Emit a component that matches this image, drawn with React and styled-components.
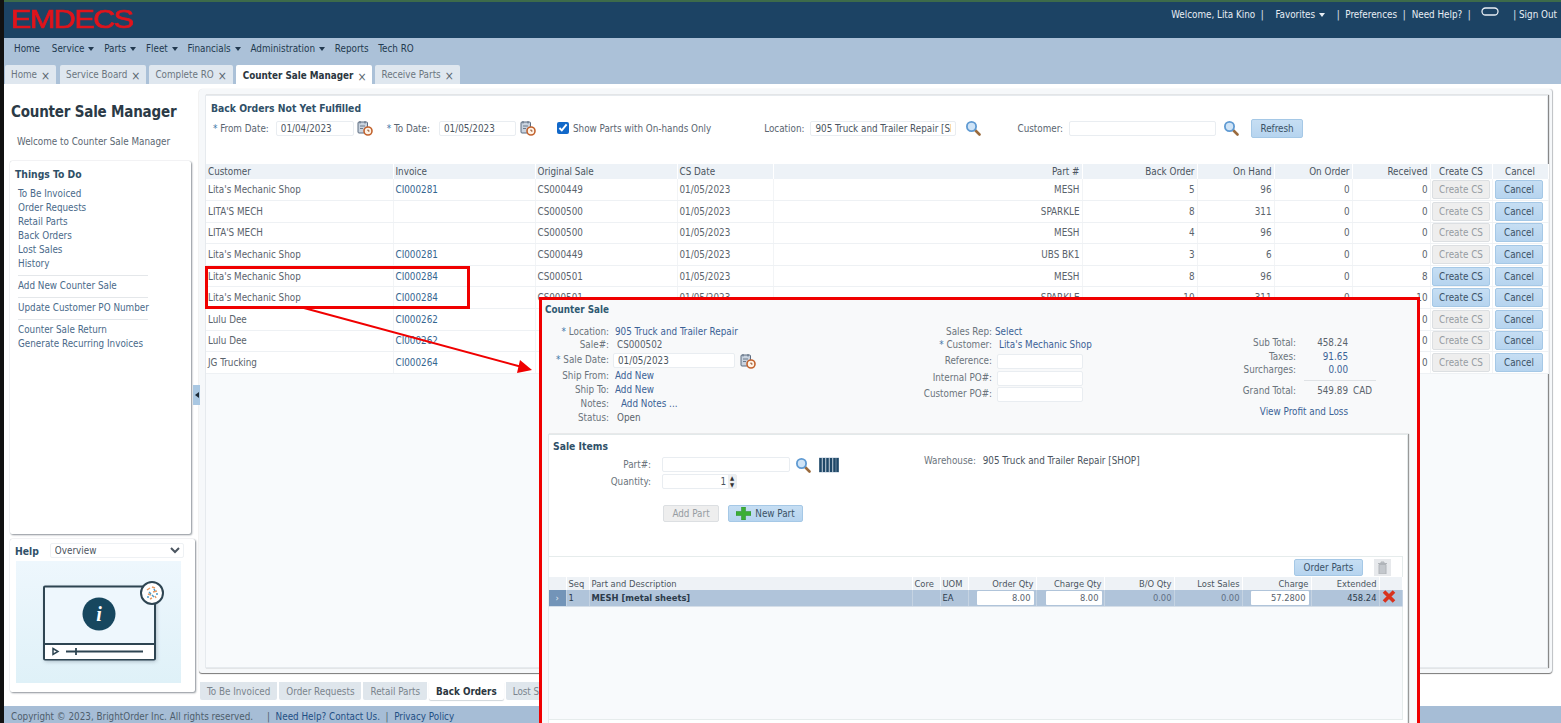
import React from 'react'
import styled, { createGlobalStyle } from 'styled-components'

const Global = createGlobalStyle`
  html, body { margin: 0; padding: 0; background: #000; }
  body { font-family: "DejaVu Sans Condensed", "DejaVu Sans", sans-serif; font-stretch: condensed; font-size: 9.8px; color: #4b5560; }
  * { box-sizing: border-box; }
  input, select, button { font-family: inherit; font-stretch: inherit; }
`

const Page = styled.div`
  position: relative;
  width: 1561px;
  height: 723px;
  overflow: hidden;
  border-left: 4px solid #111;
  background: #fff;
  display: flex;
  flex-direction: column;
`
const Header = styled.header`
  height: 38px;
  flex: none;
  background: #1c4364;
  border-top: 2px solid #3d6b4a;
  display: flex;
  justify-content: space-between;
  padding: 0 4px 0 7px;
`
const Logo = styled.div`
  font-family: "Liberation Sans", sans-serif;
  font-stretch: normal;
  font-size: 25px;
  line-height: 34px;
  color: #e0141c;
  -webkit-text-stroke: 0.7px #e0141c;
  transform: scaleX(1.22);
  transform-origin: left;
  letter-spacing: -1.2px;
`
const UserBar = styled.div`
  display: flex;
  gap: 6px;
  color: #e8eef4;
  height: 24px;
  align-items: center;
  font-weight: 500;
  white-space: pre;
`
const Oval = styled.svg`
  margin: -5px 0 0 4px;
`
const NavBar = styled.nav`
  height: 26px;
  flex: none;
  background: #abc1d8;
  display: flex;
  align-items: center;
  gap: 9.8px;
  padding: 0 10px 6px;
  color: #22394f;
  & > span:first-child { margin-right: 2px; }
`
const Caret = styled.span`
  display: inline-block;
  margin-left: 4px;
  vertical-align: 1px;
  border: 3px solid transparent;
  border-top: 4px solid ${p => p.$light ? '#e8eef4' : '#22394f'};
  border-bottom: 0;
`
const TabBar = styled.div`
  height: 20px;
  flex: none;
  background: #abc1d8;
  display: flex;
  gap: 3px;
  padding: 0 0 0 1px;
  & > div:first-child { margin-right: 1px; }
`
const Tab = styled.div`
  height: ${p => p.$active ? 20 : 19}px;
  margin-top: 1px;
  padding: 0 6px 0 ${p => p.$active ? 7 : 6}px;
  display: flex;
  align-items: center;
  gap: 4px;
  background: ${p => p.$active ? '#fff' : '#dfe7ef'};
  color: ${p => p.$active ? '#2b3640' : '#6b7680'};
  font-weight: ${p => p.$active ? 700 : 400};
  border-radius: 2px 2px 0 0;
`
const TabClose = styled.span`
  font-size: 12px;
  line-height: 10px;
  margin-top: 3px;
  color: #5a6670;
  font-weight: 400;
`
const Body = styled.div`
  flex: 1;
  min-height: 0;
  display: flex;
`
const Side = styled.aside`
  width: 195px;
  flex: none;
  padding: 0 0 0 6px;
  display: flex;
  flex-direction: column;
`
const SideTitle = styled.h1`
  margin: 20px 0 0 1px;
  font-size: 15px;
  line-height: 16px;
  letter-spacing: -0.2px;
  color: #2b3a46;
  white-space: nowrap;
`
const SideWelcome = styled.p`
  margin: 16px 0 0 7px;
  line-height: 12px;
  color: #5b6772;
`
const Card = styled.section`
  background: #fff;
  border-radius: 2px;
  box-shadow: 1px 1px 2px #8c9298, 0 0 1px #b5bbc1;
`
const TodoCard = styled(Card)`
  margin-top: 13px;
  width: 181px;
  height: 373px;
  padding: 7px 5px;
`
const CardTitle = styled.h2`
  margin: 0;
  font-size: 10.300px;
  line-height: 12px;
  color: #2f5068;
`
const LinkList = styled.div`
  margin: 7px 0 0 3px;
  width: 130px;
  display: flex;
  flex-direction: column;
  color: #4a6a8a;
  line-height: 14px;
  white-space: nowrap;
`
const Rule = styled.div`
  height: 1px;
  background: #e4e7ea;
  margin: 4px 0 3px;
`
const HelpCard = styled(Card)`
  margin-top: 5px;
  width: 185px;
  height: 153px;
  padding: 4px 6px;
`
const HelpRow = styled.div`
  display: flex;
  align-items: center;
  gap: 11px;
  margin-left: -1px;
`
const HelpSelect = styled.select`
  width: 134px;
  height: 15px;
  font-size: 9.8px;
  color: #4b5560;
  background: #fff;
  border: 1px solid #eef1f4;
  border-radius: 2px;
`
const HelpArt = styled.div`
  margin-top: 3px;
  width: 165px;
  height: 122px;
  background: linear-gradient(#eef7fd, #dff1f8);
`
const MainCol = styled.div`
  flex: 1;
  min-width: 0;
  position: relative;
  display: flex;
  flex-direction: column;
  padding-right: 9px;
`
const Collapse = styled.div`
  position: absolute;
  left: -6px;
  top: 301px;
  width: 7px;
  height: 20px;
  background: #a9c7e2;
  display: flex;
  align-items: center;
  justify-content: center;
  &::before {
    content: "";
    border: 3px solid transparent;
    border-right: 4px solid #1d2a36;
    border-left: 0;
  }
`
const Outer = styled.div`
  height: 584px;
  margin-top: 5px;
  padding: 6px 4px 5px 6px;
  border-radius: 3px;
  background: #f6f8fa;
  box-shadow: 0 1px 1px #777, 1px 0 1px #c5c9cd;
`
const Inner = styled.div`
  height: 100%;
  background: #f8fafc;
  border: 1px solid #e6eaee;
  box-shadow: 1px 0 1px #888;
  display: flex;
  flex-direction: column;
`
const FilterArea = styled.div`
  background: #fff;
  height: 68px;
  padding: 6px 5px;
  flex: none;
`
const FilterRow = styled.div`
  margin-top: 5px;
  display: flex;
  align-items: center;
  height: 18px;
`
const Label = styled.span`
  color: #5a6570;
  white-space: nowrap;
  margin-left: ${p => p.$ml || 0}px;
`
const Star = styled.span`
  color: #3f77a8;
`
const TextInput = styled.input`
  width: ${p => p.$w}px;
  height: 15px;
  margin-left: ${p => p.$ml ?? 6}px;
  padding: 0 4px;
  font-size: 9.8px;
  color: #4b5560;
  background: #fff;
  border: 1px solid #e9edf1;
  border-radius: 2px;
  outline: none;
`
const QtyInput = styled(TextInput)`
  text-align: right;
  padding-right: 10px;
`
const Check = styled.input`
  margin: 0 4px 0 21px;
  width: 12px;
  height: 12px;
  accent-color: #1168c9;
`
const IconSlot = styled.span`
  display: inline-flex;
  margin-left: ${p => p.$ml ?? 3}px;
`
const Btn = styled.button`
  height: ${p => p.$h || 19}px;
  width: ${p => p.$w}px;
  margin-left: ${p => p.$ml || 0}px;
  padding: 0;
  font-size: 9.8px;
  border-radius: 2px;
  display: inline-flex;
  align-items: center;
  justify-content: center;
  gap: 4px;
  vertical-align: middle;
  border: 1px solid ${p => p.disabled ? '#dcdfe2' : '#a5c8e6'};
  background: ${p => p.disabled ? '#eeeeee' : 'linear-gradient(#c6def3, #b6d4ef)'};
  color: ${p => p.disabled ? '#969ca2' : '#3b5266'};
`
const Table = styled.table`
  width: 100%;
  table-layout: fixed;
  border-collapse: collapse;
  background: #fff;
`
const Th = styled.th`
  height: 15px;
  padding: 0 2px;
  font-weight: 400;
  text-align: ${p => p.$align || 'left'};
  color: #4b5560;
  background: #edf2f7;
  border-right: 1px solid #fff;
`
const Td = styled.td`
  height: 21.6px;
  padding: 0 2px;
  text-align: ${p => p.$align || 'left'};
  color: ${p => p.$link ? '#34658f' : '#5a636c'};
  border-bottom: 1px solid #eef1f4;
  border-right: 1px solid #f2f4f6;
  white-space: nowrap;
  overflow: hidden;
`
const BtnCell = styled(Td)`
  padding: 0 ${p => p.$pr || 1}px 0 1px;
`
const TabsBottom = styled.div`
  display: flex;
  gap: 2px;
  margin: 9px 0 0 1px;
  height: 18px;
`
const BottomTab = styled.div`
  padding: 0 7px;
  display: flex;
  align-items: center;
  border-radius: 0 0 2px 2px;
  background: ${p => p.$active ? '#fff' : '#dfe6ec'};
  color: ${p => p.$active ? '#2b3640' : '#7a848d'};
  font-weight: ${p => p.$active ? 700 : 400};
  box-shadow: ${p => p.$active ? '0 1px 1px #cfd5da' : 'none'};
`
const Footer = styled.footer`
  height: 17px;
  flex: none;
  background: #a6bdd6;
  color: #4e5d6c;
  display: flex;
  align-items: center;
  padding: 3px 0 0 7px;
  white-space: pre;
`
const FootLink = styled.span`
  color: #1f4f84;
`
const Highlight = styled.div`
  position: absolute;
  left: 201px;
  top: 266px;
  width: 265px;
  height: 43px;
  border: 3px solid #f00000;
`
const Arrow = styled.svg`
  position: absolute;
  left: 296px;
  top: 300px;
`
const Popup = styled.div`
  position: absolute;
  left: 535px;
  top: 297px;
  width: 881px;
  height: 440px;
  background: #f8f9fa;
  border: 3px solid #f00000;
  padding: 0 9px 0 6px;
`
const PopupTitle = styled.h2`
  margin: 4px 0 0 -3px;
  font-size: 9.8px;
  line-height: 12px;
  color: #2f5a72;
`
const SaleTop = styled.div`
  display: flex;
  height: 98px;
  margin-top: 9px;
`
const FieldGrid = styled.div`
  display: grid;
  grid-template-columns: ${p => p.$label}px auto;
  grid-auto-rows: min-content;
  column-gap: ${p => p.$gap}px;
  width: ${p => p.$w}px;
  flex: none;
`
const FLabel = styled.div`
  text-align: right;
  height: ${p => p.$h || 14}px;
  line-height: 14px;
  color: #6b747c;
  white-space: nowrap;
`
const FValue = styled.div`
  height: ${p => p.$h || 14}px;
  line-height: 14px;
  padding-left: ${p => p.$pl || 0}px;
  color: ${p => p.$link ? '#3b6296' : '#5a636c'};
  white-space: nowrap;
`
const FormInput = styled(TextInput)`
  display: block;
  margin-left: ${p => p.$ml ?? 0}px;
`
const DateRow = styled.div`
  display: flex;
  align-items: flex-start;
`
const Totals = styled.div`
  margin-left: 119px;
  padding-top: 11px;
  display: grid;
  grid-template-columns: 80px 52px 28px;
  grid-auto-rows: min-content;
  align-content: start;
  line-height: 13.5px;
  width: 160px;
`
const TotLabel = styled.div`
  text-align: right;
  color: #6b747c;
  white-space: nowrap;
  min-height: ${p => p.$gap ? 7 : 13.5}px;
  height: ${p => p.$gap ? '7px' : 'auto'};
`
const TotValue = styled.div`
  text-align: right;
  color: ${p => p.$link ? '#3b6296' : '#5a636c'};
`
const TotUnit = styled.div`
  padding-left: 5px;
  color: #5a636c;
`
const TotRule = styled.div`
  grid-column: 2 / 4;
  margin: 3px 0 3px 8px;
  height: 1px;
  background: #dfe2e5;
`
const TotLink = styled.div`
  grid-column: 1 / 3;
  text-align: right;
  color: #3b6296;
  margin-top: 8px;
`
const SaleCard = styled.section`
  margin: 11px 0 0 0;
  height: 300px;
  width: 860px;
  background: #fff;
  border: 1px solid #e3e9ea;
  box-shadow: 1px 0 1px #999;
  padding: 5px 4px;
`
const SaleHead = styled.div`
  height: 94px;
  margin-top: 4px;
  display: flex;
`
const SaleForm = styled.div`
  width: 369px;
  flex: none;
`
const SaleRow = styled.div`
  display: flex;
  align-items: center;
  height: 17px;
`
const SaleLabel = styled.span`
  width: 98px;
  text-align: right;
  color: #6b747c;
`
const Spin = styled.span`
  position: absolute;
  right: 1px;
  top: 1px;
  width: 8px;
  height: 13px;
  background: #eceff1;
  font-size: 6px;
  line-height: 6.5px;
  text-align: center;
  color: #333;
`
const SpinWrap = styled.span`
  position: relative;
  display: inline-flex;
  margin-left: 11px;
`
const SaleButtons = styled.div`
  display: flex;
  gap: 9px;
  margin: 15px 0 0 110px;
`
const Warehouse = styled.div`
  margin-left: 2px;
  margin-top: -1px;
  color: #6b747c;
`
const WarehouseName = styled.span`
  color: #4b5560;
  margin-left: 4px;
`
const GridBox = styled.div`
  margin: 6px 0 0 -5px;
  width: 855px;
  height: 164px;
  background: #f8fafc;
  border: 1px solid #e6ecec;
`
const GridTools = styled.div`
  height: 20px;
  background: #fff;
  display: flex;
  justify-content: flex-end;
  align-items: center;
  gap: 11px;
  padding-right: 11px;
`
const TrashBox = styled.span`
  width: 17px;
  height: 17px;
  background: #e7e9ec;
  display: inline-flex;
  align-items: center;
  justify-content: center;
`
const ItemTable = styled.table`
  width: 100%;
  table-layout: fixed;
  border-collapse: collapse;
`
const ItemTh = styled.th`
  height: 13px;
  padding: 0 2px;
  font-weight: 400;
  font-size: 9.300px;
  background: #eef2f6;
  color: #4b5560;
  text-align: ${p => p.$align || 'left'};
  border-right: 1px solid #fff;
`
const ItemTd = styled.td`
  height: 16px;
  padding: 0 2px;
  font-size: 9.300px;
  background: #b0c4da;
  color: ${p => p.$muted ? '#5f7084' : '#2c3b4a'};
  font-weight: ${p => p.$bold ? 700 : 400};
  text-align: ${p => p.$align || 'left'};
  border-right: 1px solid #c5d3e2;
  border-bottom: 1px solid #d5dee8;
  white-space: nowrap;
  overflow: hidden;
`
const HandleCell = styled(ItemTd)`
  background: #7394b8;
  color: #e8eef4;
  text-align: center;
`
const QtyBox = styled.div`
  height: 14px;
  margin-left: ${p => p.$ml || 0}px;
  padding: 0 3px;
  line-height: 14px;
  text-align: right;
  background: #fff;
  color: #59636d;
  border-radius: 1px;
`

const Search = ({ size = 16 }) => (
  <svg width={size} height={size} viewBox="0 0 16 16">
    <line x1="9.5" y1="9.5" x2="14.5" y2="14.5" stroke="#9a6a3c" strokeWidth="2.6" strokeLinecap="round" />
    <circle cx="6.5" cy="6.5" r="4.6" fill="#cfe4f7" stroke="#5f9ad2" strokeWidth="1.8" />
  </svg>
)

const Calendar = () => (
  <svg width="16" height="16" viewBox="0 0 16 16">
    <rect x="1" y="2" width="9.5" height="11" rx="1" fill="#c9d3df" stroke="#5d6c80" />
    <path d="M3 1v2.500M8 1v2.500" stroke="#5d6c80" />
    <path d="M3 6h5M3 8.500h3" stroke="#6d7a8a" />
    <circle cx="11" cy="11" r="4" fill="#fff3e6" stroke="#c2622d" strokeWidth="1.6" />
    <path d="M11 9.500V11h1.500" stroke="#8a4520" fill="none" />
  </svg>
)

const Barcode = () => (
  <svg width="20" height="16" viewBox="0 0 20 16">
    <rect width="20" height="16" fill="#dbe3ec" />
    <path d="M1.500 1v14M5 1v14M8.500 1v14M12 1v14M15.500 1v14M18.500 1v14" stroke="#1f4868" strokeWidth="2.600" />
  </svg>
)

const Plus = () => (
  <svg width="15" height="13" viewBox="0 0 15 13">
    <path d="M5.500 0h4v4.500H15v4H9.500V13h-4V8.500H0v-4h5.500z" fill="#3cae35" stroke="#2a8a2a" strokeWidth=".5" />
  </svg>
)

const RedX = () => (
  <svg width="14" height="13" viewBox="0 0 14 13">
    <path d="M2 1.500L12 11.500M12 1.500L2 11.500" stroke="#d8321e" strokeWidth="3.600" />
  </svg>
)

const Trash = () => (
  <svg width="9" height="13" viewBox="0 0 9 13">
    <path d="M0 2.500h9M3 2.500V1h3v1.500M1 3.500h7V13H1z" fill="#c3c7cc" stroke="#b0b4b9" />
  </svg>
)

const HelpVideo = () => (
  <svg width="165" height="122" viewBox="0 0 165 122">
    <defs>
      <filter id="soft"><feGaussianBlur stdDeviation="2" /></filter>
    </defs>
    <rect x="29" y="27" width="111" height="73" fill="#567" opacity=".5" filter="url(#soft)" />
    <rect x="28" y="25.500" width="111" height="73" rx="1" fill="#eef7fd" stroke="#2e4552" strokeWidth="2" />
    <rect x="29" y="83" width="109" height="15" fill="#fff" />
    <line x1="28" y1="83" x2="139" y2="83" stroke="#2e4552" strokeWidth="2" />
    <circle cx="83" cy="53" r="16.500" fill="#17475f" />
    <text x="83" y="60" fontSize="20" fontStyle="italic" fontWeight="700" fontFamily="Liberation Serif, serif" fill="#fff" textAnchor="middle">i</text>
    <path d="M37 87.500l5 3-5 3z" fill="#fff" stroke="#2e4552" strokeWidth="1.500" />
    <line x1="50" y1="90.500" x2="127" y2="90.500" stroke="#2e4552" strokeWidth="1.800" />
    <line x1="60" y1="87" x2="60" y2="94" stroke="#2e4552" strokeWidth="1.800" />
    <circle cx="136" cy="32" r="11" fill="#fff" stroke="#2e4552" strokeWidth="2" />
    <path d="M131 29l3-2M136 26l3 1M132 33l3 1M137 31l4-1M134 38l2-1M139 35l1 2" stroke="#e89a62" strokeWidth="1.500" />
    <path d="M133 31l2 2M138 28l1 2M131 36l2 0M136 34l2 2M141 32l0 2" stroke="#4f9bc4" strokeWidth="1.500" />
  </svg>
)

const COLS = [187, 142, 142, 96, 309, 115, 77, 78, 78, 62, 56]
const HEADS = [
  ['Customer'], ['Invoice'], ['Original Sale'], ['CS Date'], ['Part #', 'right'], ['Back Order', 'right'],
  ['On Hand', 'right'], ['On Order', 'right'], ['Received', 'right'], ['Create CS', 'center'], ['Cancel', 'center'],
]
// last three rows are mostly behind the popup, only what shows is filled in
const ROWS = [
  ["Lita's Mechanic Shop", 'CI000281', 'CS000449', 'MESH', 5, 96, 0, 0, false],
  ["LITA'S MECH", '', 'CS000500', 'SPARKLE', 8, 311, 0, 0, false],
  ["LITA'S MECH", '', 'CS000500', 'MESH', 4, 96, 0, 0, false],
  ["Lita's Mechanic Shop", 'CI000281', 'CS000449', 'UBS BK1', 3, 6, 0, 0, false],
  ["Lita's Mechanic Shop", 'CI000284', 'CS000501', 'MESH', 8, 96, 0, 8, true],
  ["Lita's Mechanic Shop", 'CI000284', 'CS000501', 'SPARKLE', 10, 311, 0, 10, true],
  ['Lulu Dee', 'CI000262', '', '', '', '', '', 0, false],
  ['Lulu Dee', 'CI000262', '', '', '', '', '', 0, false],
  ['JG Trucking', 'CI000264', '', '', '', '', '', 0, false],
]
const ITEM_COLS = [17, 23, 323, 28, 28, 68, 68, 70, 68, 69, 68, 23]
const TABS = ['Home', 'Service Board', 'Complete RO', 'Counter Sale Manager', 'Receive Parts']
const MENU = [['Home'], ['Service', 1], ['Parts', 1], ['Fleet', 1], ['Financials', 1], ['Administration', 1], ['Reports'], ['Tech RO']]

const App = () => {
  return (
    <Page>
      <Global />
      <Header>
        <Logo>EMDECS</Logo>
        <UserBar>
          <span>Welcome, Lita Kino  |</span>
          <span>  Favorites<Caret $light /></span>
          <span>  |  Preferences  |</span>
          <span>Need Help?  |</span>
          <Oval width="18" height="10" viewBox="0 0 18 10">
            <rect x="1" y="1" width="16" height="7" rx="3.500" fill="none" stroke="#e8eef4" strokeWidth="1.300" />
          </Oval>
          <span>   | Sign Out</span>
        </UserBar>
      </Header>
      <NavBar>
        {MENU.map(([name, sub]) => (
          <span key={name}>{name}{sub && <Caret />}</span>
        ))}
      </NavBar>
      <TabBar>
        {TABS.map(t => (
          <Tab key={t} $active={t === 'Counter Sale Manager'}>{t}<TabClose>×</TabClose></Tab>
        ))}
      </TabBar>
      <Body>
        <Side>
          <SideTitle>Counter Sale Manager</SideTitle>
          <SideWelcome>Welcome to Counter Sale Manager</SideWelcome>
          <TodoCard>
            <CardTitle>Things To Do</CardTitle>
            <LinkList>
              <span>To Be Invoiced</span>
              <span>Order Requests</span>
              <span>Retail Parts</span>
              <span>Back Orders</span>
              <span>Lost Sales</span>
              <span>History</span>
              <Rule />
              <span>Add New Counter Sale</span>
              <Rule />
              <span>Update Customer PO Number</span>
              <Rule />
              <span>Counter Sale Return</span>
              <span>Generate Recurring Invoices</span>
            </LinkList>
          </TodoCard>
          <HelpCard>
            <HelpRow>
              <CardTitle>Help</CardTitle>
              <HelpSelect defaultValue="Overview"><option>Overview</option></HelpSelect>
            </HelpRow>
            <HelpArt><HelpVideo /></HelpArt>
          </HelpCard>
        </Side>
        <MainCol>
          <Collapse />
          <Outer>
            <Inner>
              <FilterArea>
                <CardTitle>Back Orders Not Yet Fulfilled</CardTitle>
                <FilterRow>
                  <Label $ml={2}><Star>*</Star> From Date:</Label>
                  <TextInput $w={78} $ml={7} readOnly value="01/04/2023" />
                  <IconSlot><Calendar /></IconSlot>
                  <Label $ml={14}><Star>*</Star> To Date:</Label>
                  <TextInput $w={77} $ml={9} readOnly value="01/05/2023" />
                  <IconSlot $ml={4}><Calendar /></IconSlot>
                  <Check type="checkbox" readOnly checked />
                  <Label>Show Parts with On-hands Only</Label>
                  <Label $ml={53}>Location:</Label>
                  <TextInput $w={146} readOnly value="905 Truck and Trailer Repair [SHOP]" />
                  <IconSlot $ml={9}><Search /></IconSlot>
                  <Label $ml={36}>Customer:</Label>
                  <TextInput $w={147} $ml={6} readOnly value="" />
                  <IconSlot $ml={7}><Search /></IconSlot>
                  <Btn $w={52} $ml={12}>Refresh</Btn>
                </FilterRow>
              </FilterArea>
              <Table>
                <colgroup>{COLS.map((w, i) => <col key={i} width={w} />)}</colgroup>
                <thead>
                  <tr>{HEADS.map(([h, a]) => <Th key={h} $align={a}>{h}</Th>)}</tr>
                </thead>
                <tbody>
                  {ROWS.map((r, i) => (
                    <tr key={i}>
                      <Td>{r[0]}</Td>
                      <Td $link>{r[1]}</Td>
                      <Td>{r[2]}</Td>
                      <Td>{r[2] && '01/05/2023'}</Td>
                      <Td $align="right">{r[3]}</Td>
                      <Td $align="right">{r[4]}</Td>
                      <Td $align="right">{r[5]}</Td>
                      <Td $align="right">{r[6]}</Td>
                      <Td $align="right">{r[7]}</Td>
                      <BtnCell $align="center"><Btn $w={58} disabled={!r[8]}>Create CS</Btn></BtnCell>
                      <BtnCell $align="center" $pr={3}><Btn $w={48}>Cancel</Btn></BtnCell>
                    </tr>
                  ))}
                </tbody>
              </Table>
            </Inner>
          </Outer>
          <TabsBottom>
            <BottomTab>To Be Invoiced</BottomTab>
            <BottomTab>Order Requests</BottomTab>
            <BottomTab>Retail Parts</BottomTab>
            <BottomTab $active>Back Orders</BottomTab>
            <BottomTab>Lost Sales</BottomTab>
          </TabsBottom>
        </MainCol>
      </Body>
      <Footer>
        Copyright © 2023, BrightOrder Inc. All rights reserved.     |  <FootLink>Need Help? Contact Us.</FootLink>  |  <FootLink>Privacy Policy</FootLink>
      </Footer>
      <Highlight />
      <Arrow width="240" height="80" viewBox="0 0 240 80">
        <line x1="4" y1="8" x2="222" y2="67" stroke="#f00000" strokeWidth="2" />
        <path d="M232 70L217 73L220 60z" fill="#f00000" />
      </Arrow>
      <Popup>
        <PopupTitle>Counter Sale</PopupTitle>
        <SaleTop>
          <FieldGrid $label={61} $gap={6} $w={374}>
            <FLabel $h={13}><Star>*</Star> Location:</FLabel><FValue $h={13} $link>905 Truck and Trailer Repair</FValue>
            <FLabel $h={15}>Sale#:</FLabel><FValue $h={15} $pl={2}>CS000502</FValue>
            <FLabel $h={16}><Star>*</Star> Sale Date:</FLabel>
            <DateRow>
              <FormInput $w={122} $ml={-2} readOnly value="01/05/2023" />
              <IconSlot $ml={5}><Calendar /></IconSlot>
            </DateRow>
            <FLabel $h={13.5}>Ship From:</FLabel><FValue $h={13.5} $link>Add New</FValue>
            <FLabel>Ship To:</FLabel><FValue $link>Add New</FValue>
            <FLabel>Notes:</FLabel><FValue $link $pl={6}>Add Notes ...</FValue>
            <FLabel>Status:</FLabel><FValue $pl={2}>Open</FValue>
          </FieldGrid>
          <FieldGrid $label={70} $gap={3} $w={175}>
            <FLabel $h={13}>Sales Rep:</FLabel><FValue $h={13} $link>Select</FValue>
            <FLabel $h={16}><Star>*</Star> Customer:</FLabel><FValue $h={16} $link $pl={4}>Lita's Mechanic Shop</FValue>
            <FLabel $h={17}>Reference:</FLabel><FormInput $w={86} $ml={2} readOnly value="" />
            <FLabel $h={16}>Internal PO#:</FLabel><FormInput $w={86} $ml={2} readOnly value="" />
            <FLabel $h={16}>Customer PO#:</FLabel><FormInput $w={86} $ml={2} readOnly value="" />
          </FieldGrid>
          <Totals>
            <TotLabel>Sub Total:</TotLabel><TotValue>458.24</TotValue><TotUnit />
            <TotLabel>Taxes:</TotLabel><TotValue $link>91.65</TotValue><TotUnit />
            <TotLabel>Surcharges:</TotLabel><TotValue $link>0.00</TotValue><TotUnit />
            <TotLabel $gap /><TotRule />
            <TotLabel>Grand Total:</TotLabel><TotValue>549.89</TotValue><TotUnit>CAD</TotUnit>
            <TotLink>View Profit and Loss</TotLink>
          </Totals>
        </SaleTop>
        <SaleCard>
          <CardTitle>Sale Items</CardTitle>
          <SaleHead>
            <SaleForm>
              <SaleRow>
                <SaleLabel>Part#:</SaleLabel>
                <TextInput $w={128} $ml={11} readOnly value="" />
                <IconSlot $ml={5}><Search /></IconSlot>
                <IconSlot $ml={8}><Barcode /></IconSlot>
              </SaleRow>
              <SaleRow>
                <SaleLabel>Quantity:</SaleLabel>
                <SpinWrap>
                  <QtyInput $w={75} $ml={0} readOnly value="1" />
                  <Spin>▲<br />▼</Spin>
                </SpinWrap>
              </SaleRow>
              <SaleButtons>
                <Btn $w={56} $h={17} disabled>Add Part</Btn>
                <Btn $w={75} $h={17}><Plus />New Part</Btn>
              </SaleButtons>
            </SaleForm>
            <Warehouse>Warehouse: <WarehouseName>905 Truck and Trailer Repair [SHOP]</WarehouseName></Warehouse>
          </SaleHead>
          <GridBox>
            <GridTools>
              <Btn $w={69} $h={17}>Order Parts</Btn>
              <TrashBox><Trash /></TrashBox>
            </GridTools>
            <ItemTable>
              <colgroup>{ITEM_COLS.map((w, i) => <col key={i} width={w} />)}</colgroup>
              <thead>
                <tr>
                  <ItemTh />
                  <ItemTh>Seq</ItemTh>
                  <ItemTh>Part and Description</ItemTh>
                  <ItemTh>Core</ItemTh>
                  <ItemTh>UOM</ItemTh>
                  <ItemTh $align="right">Order Qty</ItemTh>
                  <ItemTh $align="right">Charge Qty</ItemTh>
                  <ItemTh $align="right">B/O Qty</ItemTh>
                  <ItemTh $align="right">Lost Sales</ItemTh>
                  <ItemTh $align="right">Charge</ItemTh>
                  <ItemTh $align="right">Extended</ItemTh>
                  <ItemTh />
                </tr>
              </thead>
              <tbody>
                <tr>
                  <HandleCell>›</HandleCell>
                  <ItemTd>1</ItemTd>
                  <ItemTd $bold>MESH [metal sheets]</ItemTd>
                  <ItemTd />
                  <ItemTd>EA</ItemTd>
                  <ItemTd><QtyBox $ml={6}>8.00</QtyBox></ItemTd>
                  <ItemTd><QtyBox $ml={7}>8.00</QtyBox></ItemTd>
                  <ItemTd $align="right" $muted>0.00</ItemTd>
                  <ItemTd $align="right" $muted>0.00</ItemTd>
                  <ItemTd><QtyBox $ml={6}>57.2800</QtyBox></ItemTd>
                  <ItemTd $align="right">458.24</ItemTd>
                  <ItemTd><RedX /></ItemTd>
                </tr>
              </tbody>
            </ItemTable>
          </GridBox>
        </SaleCard>
      </Popup>
    </Page>
  )
}

export default App
